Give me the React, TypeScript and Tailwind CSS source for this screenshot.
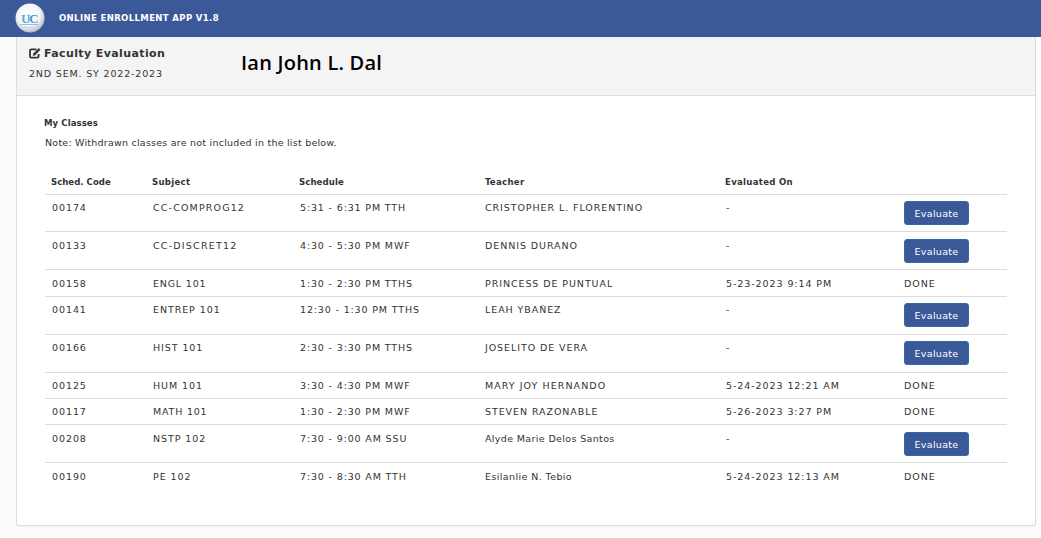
interface ClassRow {
  code: string;
  subject: string;
  schedule: string;
  teacher: string;
  evaluatedOn: string;
  layout: string;
  subjectStyle?: string;
  teacherStyle?: string;
}

const rows: ClassRow[] = [
  { code: '00174', subject: 'CC-COMPROG12', schedule: '5:31 - 6:31 PM TTH', teacher: 'CRISTOPHER L. FLORENTINO', evaluatedOn: '', layout: 'h-[37px] pt-[6px]', subjectStyle: 'tracking-[1.15px]' },
  { code: '00133', subject: 'CC-DISCRET12', schedule: '4:30 - 5:30 PM MWF', teacher: 'DENNIS DURANO', evaluatedOn: '', layout: 'h-[38px] pt-[7px]', subjectStyle: 'tracking-[1.2px]' },
  { code: '00158', subject: 'ENGL 101', schedule: '1:30 - 2:30 PM TTHS', teacher: 'PRINCESS DE PUNTUAL', evaluatedOn: '5-23-2023 9:14 PM', layout: 'h-[27px] pt-[7px]', subjectStyle: 'tracking-[0.8px]' },
  { code: '00141', subject: 'ENTREP 101', schedule: '12:30 - 1:30 PM TTHS', teacher: 'LEAH YBAÑEZ', evaluatedOn: '', layout: 'h-[38px] pt-[6px]' },
  { code: '00166', subject: 'HIST 101', schedule: '2:30 - 3:30 PM TTHS', teacher: 'JOSELITO DE VERA', evaluatedOn: '', layout: 'h-[38px] pt-[6px]' },
  { code: '00125', subject: 'HUM 101', schedule: '3:30 - 4:30 PM MWF', teacher: 'MARY JOY HERNANDO', evaluatedOn: '5-24-2023 12:21 AM', layout: 'h-[26px] pt-[6px]', teacherStyle: 'tracking-[1.05px]' },
  { code: '00117', subject: 'MATH 101', schedule: '1:30 - 2:30 PM MWF', teacher: 'STEVEN RAZONABLE', evaluatedOn: '5-26-2023 3:27 PM', layout: 'h-[26px] pt-[6px]', subjectStyle: 'tracking-[0.8px]' },
  { code: '00208', subject: 'NSTP 102', schedule: '7:30 - 9:00 AM SSU', teacher: 'Alyde Marie Delos Santos', evaluatedOn: '', layout: 'h-[38px] pt-[7px]', teacherStyle: 'tracking-[0.36px]' },
  { code: '00190', subject: 'PE 102', schedule: '7:30 - 8:30 AM TTH', teacher: 'Esilanlie N. Tebio', evaluatedOn: '5-24-2023 12:13 AM', layout: 'h-[38px] pt-[7px]', teacherStyle: 'tracking-[0.4px]' },
];

function Logo() {
  return (
    <svg width="30" height="30" viewBox="0 0 30 30" className="shrink-0">
      <defs>
        <radialGradient id="disc" cx="45%" cy="40%" r="60%">
          <stop offset="0" stopColor="#ffffff" />
          <stop offset="0.65" stopColor="#f3f5f6" />
          <stop offset="1" stopColor="#b9bcc4" />
        </radialGradient>
      </defs>
      <circle cx="15" cy="15" r="14.5" fill="url(#disc)" />
      <g fontFamily="'Liberation Serif', serif" fontWeight="700" fontSize="13">
        <text x="6" y="20" fill="#5aa9de" textLength="9">U</text>
        <text x="14" y="20" fill="#4a98d6" textLength="8.5">C</text>
      </g>
      <path d="M13.5 11.5v8" stroke="#5cb8a0" strokeWidth="1.2" />
      <path d="M5 21.5h18" stroke="#8fbfe6" strokeWidth="1" />
      <path d="M9 24.3h11" stroke="#b5d2ea" strokeWidth="0.9" />
    </svg>
  );
}

function EditIcon() {
  return (
    <svg width="12" height="11" viewBox="0 0 12 11" fill="none" stroke="#333" className="-mt-[2px] shrink-0">
      <path d="M7.5 1.3H2.4Q1 1.3 1 2.7v5.6Q1 9.7 2.4 9.7h5.8Q9.6 9.7 9.6 8.3V6" strokeWidth="1.8" />
      <path d="M4 7.7l.5-2.3L9.8.3l1.4 1.4L6.2 7z" fill="#333" strokeWidth="0.4" />
    </svg>
  );
}

export default function App() {
  return (
    <div className="flex h-[538px] w-[1041px] flex-col overflow-hidden bg-[#fcfcfc] font-['DejaVu_Sans',sans-serif] text-[9.5px] leading-[14px] text-[#333]">
      <header className="flex h-[37px] shrink-0 items-center gap-[14px] bg-[#3b5998] pb-[2px] pl-[15px]">
        <Logo />
        <span className="whitespace-nowrap font-['DejaVu_Sans_Condensed','DejaVu_Sans',sans-serif] font-bold tracking-[0.35px] text-white">ONLINE ENROLLMENT APP V1.8</span>
      </header>

      <main className="ml-4 h-[489px] w-[1020px] rounded-b-[3px] border border-t-0 border-[#ddd] bg-white shadow-[0_1px_1px_rgba(0,0,0,0.05)]">
        <div className="flex h-[59px] border-b border-[#ddd] bg-[#f4f4f4] pl-3">
          <div className="w-[212px] pt-[9px]">
            <h1 className="flex items-center gap-[3px] whitespace-nowrap text-[11px] leading-4 font-bold tracking-[0.39px]">
              <EditIcon />
              Faculty Evaluation
            </h1>
            <p className="mt-[5px] whitespace-nowrap tracking-[0.83px]">2ND SEM. SY 2022-2023</p>
          </div>
          <div className="pt-[12px] font-['Open_Sans',sans-serif] text-[20px] leading-[28px] font-semibold tracking-[0.22px] whitespace-nowrap text-black">Ian John L. Dal</div>
        </div>

        <section className="pl-7">
          <h2 className="mt-5 -ml-px font-['DejaVu_Sans_Condensed','DejaVu_Sans',sans-serif] font-bold tracking-[0.08px]">My Classes</h2>
          <p className="mt-[6px] tracking-[0.23px]">Note: Withdrawn classes are not included in the list below.</p>

          <div className="mt-[25px] w-[962px]">
            <div className="grid h-[20px] grid-cols-[101px_147px_186px_240px_179px_1fr] border-b border-[#ddd] pl-[6px] font-['DejaVu_Sans_Condensed','DejaVu_Sans',sans-serif] font-bold tracking-[0.3px]">
              <span className="tracking-[0.02px]">Sched. Code</span>
              <span>Subject</span>
              <span className="tracking-[0.1px]">Schedule</span>
              <span>Teacher</span>
              <span>Evaluated On</span>
              <span />
            </div>
            {rows.map((row) => (
              <div key={row.code} className={`${row.layout} grid grid-cols-[101px_147px_185px_241px_178px_1fr] border-b border-[#ddd] pl-[7px] tracking-[0.92px] whitespace-nowrap last:border-b-0`}>
                <span>{row.code}</span>
                <span className={row.subjectStyle}>{row.subject}</span>
                <span className="tracking-[0.85px]">{row.schedule}</span>
                <span className={row.teacherStyle}>{row.teacher}</span>
                <span>{row.evaluatedOn || '-'}</span>
                {row.evaluatedOn ? (
                  <span>DONE</span>
                ) : (
                  <button className="flex h-6 w-[65px] items-center justify-center rounded-[3px] border border-[#2e6da4] bg-[#3b5998] pt-[1px] tracking-[0.3px] text-white">Evaluate</button>
                )}
              </div>
            ))}
          </div>
        </section>
      </main>
    </div>
  );
}
